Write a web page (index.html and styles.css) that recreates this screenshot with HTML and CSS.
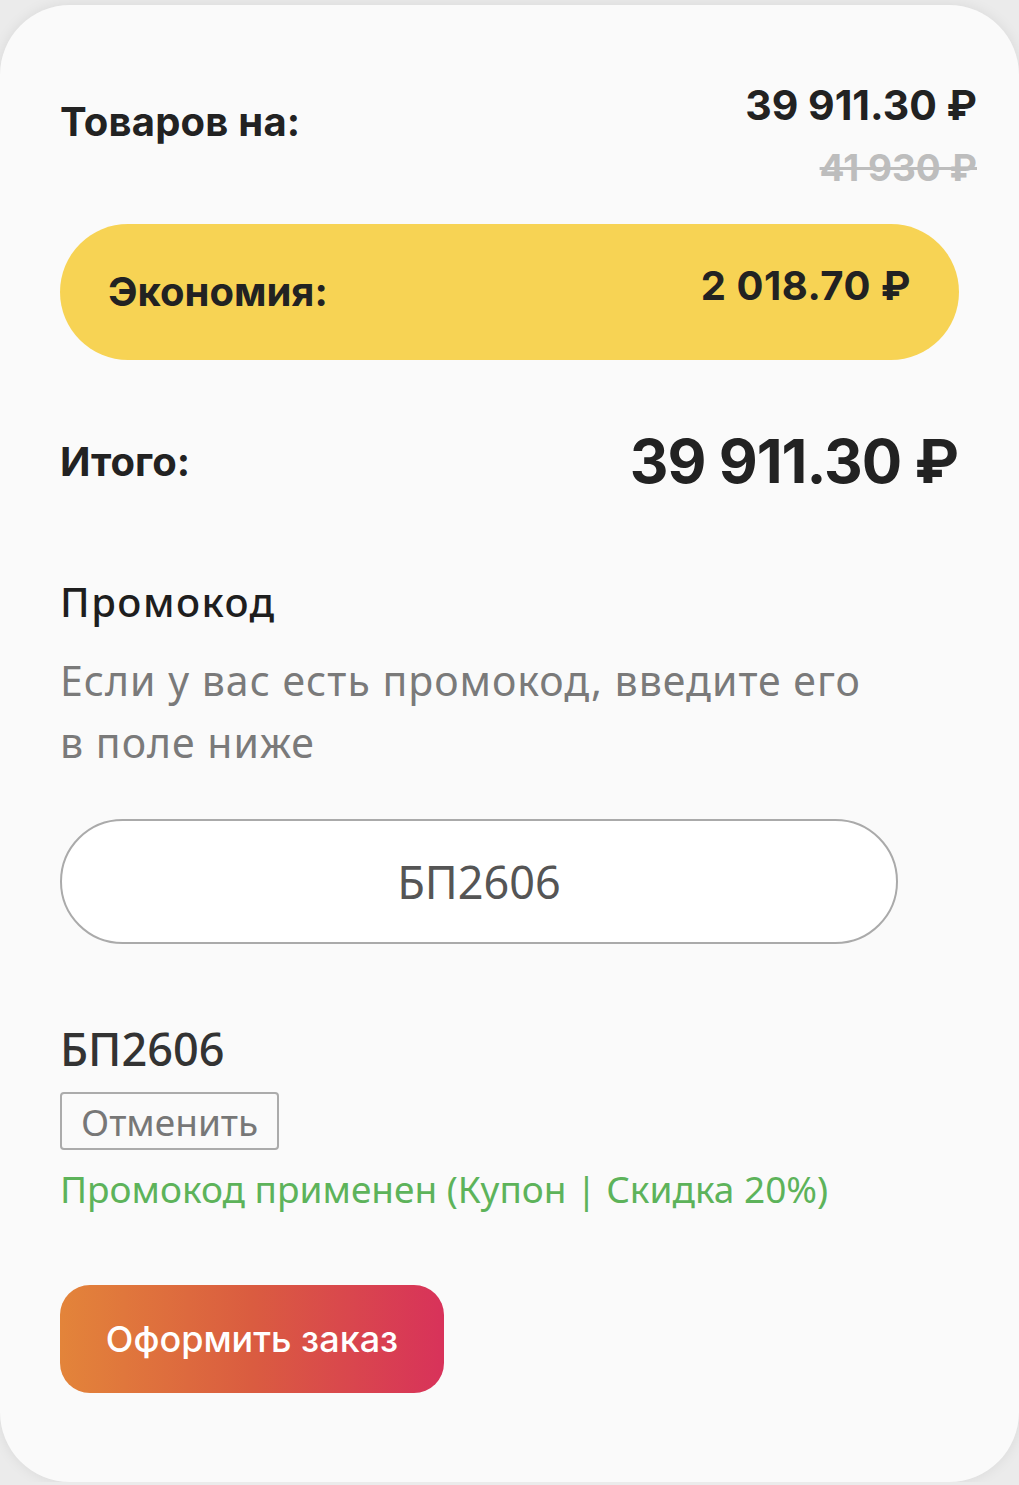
FILE: index.html
```html
<!DOCTYPE html>
<html lang="ru">
<head>
  <meta charset="UTF-8">
  <meta name="viewport" content="width=device-width, initial-scale=1.0">
  <title>Корзина - итого</title>
  <link rel="stylesheet" href="styles.css">
</head>
<body>

<div class="card">
  <!-- Summary -->
  <div class="row goods">
    <span class="label">Товаров на:</span>
    <div class="prices">
      <div class="price">39 911.30 ₽</div>
      <div class="old-price">41 930 ₽</div>
    </div>
  </div>

  <div class="savings">
    <span class="label">Экономия:</span>
    <span class="price">2 018.70 ₽</span>
  </div>

  <div class="row total">
    <span class="label">Итого:</span>
    <span class="total-price">39 911.30 ₽</span>
  </div>

  <!-- Promo code -->
  <div class="promo">
    <h2>Промокод</h2>
    <p class="hint">Если у вас есть промокод, введите его в поле ниже</p>
    <input class="promo-input" type="text" value="БП2606">
    <div class="applied-code">БП2606</div>
    <button class="cancel">Отменить</button>
    <p class="success">Промокод применен (Купон | Скидка 20%)</p>
  </div>

  <button class="checkout">Оформить заказ</button>
</div>

</body>
</html>
```

FILE: styles.css
```css
/* Global Styling */
* {
  box-sizing: border-box;
  margin: 0;
  padding: 0;
}
body {
  font-family: "Noto Sans", Arial, sans-serif;
  background-color: #EBEBEB;
  color: #222;
}
.card {
  margin-top: 5px;
  min-height: 1477px;
  background-color: #FAFAFA;
  border-radius: 70px;
  box-shadow: 0 0 14px rgba(0, 0, 0, 0.08);
  padding: 76px 42px 0 60px;
}

/* Summary rows */
.row {
  display: flex;
  justify-content: space-between;
}
.label, .price, .total-price, .old-price {
  font-family: Inter, Arial, sans-serif;
  font-weight: 700;
  color: #222;
}
.goods .label {
  font-size: 40px;
  line-height: 48px;
  margin-top: 17px;
  letter-spacing: 0.2px;
}
.prices {
  text-align: right;
}
.price {
  font-size: 41px;
  line-height: 48px;
}
.old-price {
  font-size: 37px;
  line-height: 48px;
  margin-top: 15px;
  color: #BDBDBD;
  text-decoration: line-through;
}

/* Savings bar */
.savings {
  display: flex;
  justify-content: space-between;
  align-items: center;
  height: 136px;
  margin: 32px 18px 0 0;
  padding: 0 48px;
  background-color: #F7D354;
  border-radius: 68px;
}
.savings .label {
  font-size: 40px;
  line-height: 48px;
}
.savings .price {
  font-size: 40px;
  letter-spacing: 0.5px;
  margin-bottom: 12px;
}

/* Total */
.total {
  align-items: center;
  margin: 65px 19px 0 0;
}
.total .label {
  font-size: 40px;
}
.total-price {
  font-size: 60px;
  line-height: 72px;
  letter-spacing: -1px;
}

/* Promo code */
.promo {
  margin-top: 81px;
}
.promo h2 {
  font-size: 40px;
  font-weight: 500;
  line-height: 48px;
  letter-spacing: 1.5px;
  color: #1E1E1E;
}
.hint {
  margin-top: 23px;
  font-size: 41px;
  line-height: 62px;
  letter-spacing: 1px;
  color: #7A7A7A;
  max-width: 830px;
}
.promo-input {
  display: block;
  width: 838px;
  height: 125px;
  margin-top: 46px;
  border: 2px solid #AAAAAA;
  border-radius: 63px;
  background: #FFFFFF;
  font-family: "Noto Sans", Arial, sans-serif;
  font-size: 45px;
  color: #555;
  text-align: center;
  outline: none;
}
.applied-code {
  margin-top: 80px;
  font-size: 45px;
  font-weight: 500;
  line-height: 50px;
  color: #333;
}
.cancel {
  display: block;
  margin-top: 18px;
  padding: 0 19px;
  height: 58px;
  background: transparent;
  border: 2px solid #ABABAB;
  border-radius: 4px;
  font-family: "Noto Sans", Arial, sans-serif;
  font-size: 37px;
  color: #777;
}
.success {
  margin-top: 16px;
  font-size: 37px;
  line-height: 46px;
  color: #5DB35A;
}

/* Checkout button */
.checkout {
  display: block;
  margin-top: 73px;
  width: 384px;
  height: 108px;
  border: none;
  border-radius: 30px;
  background: linear-gradient(90deg, #E3843A 0%, #DA5C40 50%, #D8325A 100%);
  font-family: Inter, Arial, sans-serif;
  font-size: 36px;
  font-weight: 500;
  color: #FFFFFF;
  cursor: pointer;
}
```
